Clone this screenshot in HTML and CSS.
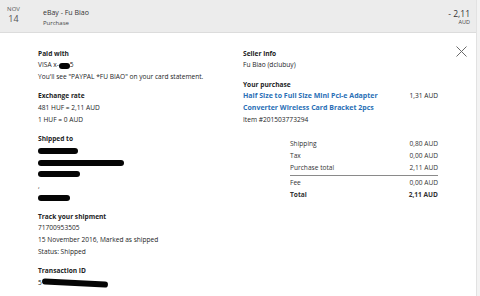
FILE: index.html
```html
<!DOCTYPE html>
<html>
<head>
<meta charset="utf-8">
<link rel="stylesheet" href="styles.css">
</head>
<body>
<div class="page">
  <div class="main">
    <header class="head">
      <div class="date"><div class="mon">NOV</div><div class="day">14</div></div>
      <div class="title"><div class="name">eBay - Fu Biao</div><div class="type">Purchase</div></div>
      <div class="amount"><div class="amt">- 2,11</div><div class="cur">AUD</div></div>
    </header>
    <div class="body">
      <div class="col left">
        <section class="sec">
          <div class="lbl">Paid with</div>
          <div class="ln">VISA x-<span class="blob b-visa"></span>5</div>
          <div class="ln">You'll see "PAYPAL *FU BIAO" on your card statement.</div>
        </section>
        <section class="sec">
          <div class="lbl">Exchange rate</div>
          <div class="ln">481 HUF = 2,11 AUD</div>
          <div class="ln">1 HUF = 0 AUD</div>
        </section>
        <section class="sec">
          <div class="lbl">Shipped to</div>
          <div class="ln"><span class="blob b1"></span></div>
          <div class="ln"><span class="blob b2"></span></div>
          <div class="ln"><span class="blob b3"></span></div>
          <div class="ln">,</div>
          <div class="ln"><span class="blob b4"></span></div>
        </section>
        <section class="sec">
          <div class="lbl">Track your shipment</div>
          <div class="ln">71700953505</div>
          <div class="ln">15 November 2016, Marked as shipped</div>
          <div class="ln">Status: Shipped</div>
        </section>
        <section class="sec">
          <div class="lbl">Transaction ID</div>
          <div class="ln">5<span class="blob b5"></span></div>
        </section>
      </div>
      <div class="col right">
        <section class="sec">
          <div class="lbl">Seller info</div>
          <div class="ln">Fu Biao (dclubuy)</div>
        </section>
        <section class="sec">
          <div class="lbl">Your purchase</div>
          <div class="item">
            <div class="iname">Half Size to Full Size Mini Pci-e Adapter Converter Wireless Card Bracket 2pcs</div>
            <div class="iprice">1,31 AUD</div>
          </div>
          <div class="ln">Item #201503773294</div>
        </section>
        <div class="sum">
          <div class="row"><span>Shipping</span><span>0,80 AUD</span></div>
          <div class="row"><span>Tax</span><span>0,00 AUD</span></div>
          <div class="row line"><span>Purchase total</span><span>2,11 AUD</span></div>
          <div class="row"><span>Fee</span><span>0,00 AUD</span></div>
          <div class="row tot"><span>Total</span><span>2,11 AUD</span></div>
        </div>
      </div>
      <div class="close">
        <svg width="11" height="11" viewBox="0 0 11 11"><path d="M0.5 0.5L10.5 10.5M10.5 0.5L0.5 10.5" stroke="#6a6a6a" stroke-width="1" fill="none"/></svg>
      </div>
    </div>
  </div>
  <div class="strip"></div>
</div>
</body>
</html>
```
FILE: styles.css
```css
html, body { margin: 0; padding: 0; }
body {
  width: 480px;
  height: 296px;
  overflow: hidden;
  font-family: "Open Sans", "DejaVu Sans", sans-serif;
  color: #232425;
  background: #fff;
}
.page { display: flex; height: 296px; }
.main { width: 476px; display: flex; flex-direction: column; }
.strip { width: 3px; border-left: 1px solid #e2e2e2; background: #f3f3f3; }
.head {
  height: 33px;
  background: #ececec;
  border-bottom: 1px solid #dcdcdc;
  display: flex;
  align-items: flex-start;
  box-sizing: border-box;
}
.date { width: 27px; text-align: center; padding-top: 6px; color: #555; }
.mon { font-size: 6px; line-height: 7px; }
.day { font-size: 9px; line-height: 11px; }
.title { padding-left: 16px; padding-top: 8px; flex: 1; }
.name { font-size: 7px; line-height: 10px; color: #333; }
.type { font-size: 6px; line-height: 11px; color: #444; }
.amount { text-align: right; padding-right: 6px; padding-top: 9px; }
.amt { font-size: 8.5px; line-height: 10px; color: #333; }
.cur { font-size: 5.5px; line-height: 7px; color: #444; }

.body { display: flex; padding-left: 38px; padding-top: 15px; font-size: 6.6px; position: relative; }
.col { display: flex; flex-direction: column; }
.left { width: 205px; }
.right { width: 195px; }
.sec { margin-bottom: 7.6px; }
.lbl { font-weight: 700; line-height: 11.7px; }
.ln { line-height: 11.7px; white-space: nowrap; height: 11.7px; }
.blob { display: inline-block; background: #050505; border-radius: 4px; vertical-align: middle; }
.b-visa { width: 11px; height: 6px; }
.b1 { width: 40px; height: 6px; }
.b2 { width: 86px; height: 6px; }
.b3 { width: 42px; height: 6px; }
.b4 { width: 32px; height: 6px; }
.b5 { width: 66px; height: 6px; transform: rotate(3deg); }
.item { display: flex; justify-content: space-between; }
.iname { width: 136px; color: #2a6fb6; font-weight: 700; font-size: 7px; line-height: 12px; }
.iprice { line-height: 12px; }
.sum { margin-left: 47px; margin-top: 4px; width: 148px; }
.row { display: flex; justify-content: space-between; line-height: 12px; color: #333; }
.row.line { border-bottom: 1px solid #8a8a8a; padding-bottom: 1px; margin-bottom: 1px; }
.row.tot { font-weight: 700; }
.close { position: absolute; right: 9px; top: 13px; line-height: 0; }
```
